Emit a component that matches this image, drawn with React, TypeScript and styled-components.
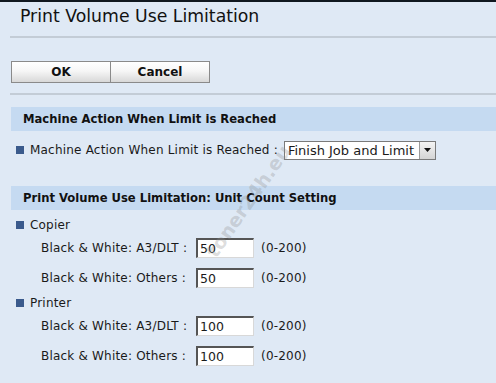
import React from "react";
import styled, { createGlobalStyle } from "styled-components";

const GlobalStyle = createGlobalStyle`
  html, body {
    margin: 0;
    padding: 0;
    background: #dfe9f5;
  }
  body {
    font-family: "DejaVu Sans", Verdana, sans-serif;
    color: #1a1a1a;
  }
`;

const SPage = styled.div`
  position: relative;
  width: 496px;
  height: 383px;
  overflow: hidden;
  border-top: 2px solid #101820;
  box-sizing: border-box;
`;

const STitle = styled.h1`
  margin: 0 0 0 10px;
  padding: 4px 0 0 10px;
  height: 30px;
  font-size: 17.3px;
  font-weight: normal;
  color: #111;
  border-bottom: 2px solid #c3ccd6;
`;

const SButtonBar = styled.div`
  display: flex;
  margin: 0 0 0 10px;
  padding: 23px 0 10px 1px;
  border-bottom: 2px solid #c3ccd6;
`;

const SButton = styled.button`
  width: 100px;
  height: 22px;
  padding: 0;
  font-family: "DejaVu Sans", Verdana, sans-serif;
  font-size: 12px;
  font-weight: bold;
  color: #111;
  background: linear-gradient(#ffffff 0%, #f6f6f6 45%, #d8d8d8 100%);
  border: 1px solid #8a8a8a;
  & + & {
    margin-left: -1px;
  }
`;

const SSectionHeader = styled.div<{ $top: number }>`
  margin: ${(p) => p.$top}px 0 0 11px;
  height: 24px;
  display: flex;
  align-items: center;
  padding-left: 12px;
  background: #c5daf1;
  font-size: 11.6px;
  font-weight: bold;
  color: #111;
`;

const SBulletRow = styled.div<{ $top: number }>`
  display: flex;
  align-items: center;
  margin: ${(p) => p.$top}px 0 0 16px;
  height: 20px;
  font-size: 12px;
  letter-spacing: 0.2px;
`;

const SBullet = styled.span`
  width: 8px;
  height: 8px;
  background: #3a5a8c;
  margin-right: 6px;
  flex-shrink: 0;
`;

const SSelect = styled.div`
  display: flex;
  align-items: stretch;
  margin-left: 6px;
  height: 19px;
  background: #fff;
  border: 1px solid #7a7a7a;
  box-sizing: border-box;
  letter-spacing: 0;
`;

const SSelectText = styled.span`
  padding: 0 5px 0 3px;
  font-size: 13px;
  line-height: 17px;
`;

const SSelectArrow = styled.span`
  width: 15px;
  display: flex;
  align-items: center;
  justify-content: center;
  background: linear-gradient(#f4f4f4, #d4d4d4);
  border-left: 1px solid #9a9a9a;
`;

const SFieldRow = styled.div<{ $top: number }>`
  display: flex;
  align-items: center;
  margin: ${(p) => p.$top}px 0 0 41px;
  height: 20px;
  font-size: 12px;
  letter-spacing: 0.2px;
`;

const SFieldLabel = styled.span`
  width: 155px;
  white-space: pre;
`;

const SInput = styled.div`
  width: 58px;
  height: 20px;
  box-sizing: border-box;
  background: #fff;
  border-top: 2px solid #555;
  border-left: 2px solid #555;
  border-right: 1px solid #d8d8d8;
  border-bottom: 1px solid #d8d8d8;
  padding-left: 2px;
  font-size: 12.5px;
  line-height: 17px;
  letter-spacing: 0;
`;

const SRange = styled.span`
  margin-left: 7px;
`;

const SWatermark = styled.div`
  position: absolute;
  left: 173px;
  top: 188px;
  width: 150px;
  text-align: center;
  transform: rotate(-55deg);
  font-family: "DejaVu Sans", sans-serif;
  font-size: 19px;
  font-weight: bold;
  color: rgba(140, 140, 140, 0.3);
  pointer-events: none;
`;

const fields = [
  { group: "Copier", rows: [["Black & White: A3/DLT :", "50"], ["Black & White: Others :", "50"]] },
  { group: "Printer", rows: [["Black & White: A3/DLT :", "100"], ["Black & White: Others :", "100"]] },
];

const App = () => (
  <>
    <GlobalStyle />
    <SPage>
      <STitle>Print Volume Use Limitation</STitle>
      <SButtonBar>
        <SButton>OK</SButton>
        <SButton>Cancel</SButton>
      </SButtonBar>
      <SSectionHeader $top={12}>Machine Action When Limit is Reached</SSectionHeader>
      <SBulletRow $top={9}>
        <SBullet />
        Machine Action When Limit is Reached :
        <SSelect>
          <SSelectText>Finish Job and Limit</SSelectText>
          <SSelectArrow>
            <svg width="7" height="4" viewBox="0 0 7 4">
              <path d="M0 0h7L3.5 4z" fill="#111" />
            </svg>
          </SSelectArrow>
        </SSelect>
      </SBulletRow>
      <SSectionHeader $top={26}>
        Print Volume Use Limitation: Unit Count Setting
      </SSectionHeader>
      {fields.map((f) => (
        <React.Fragment key={f.group}>
          <SBulletRow $top={5}>
            <SBullet />
            {f.group}
          </SBulletRow>
          {f.rows.map(([label, value], i) => (
            <SFieldRow key={i} $top={i === 0 ? 3 : 10}>
              <SFieldLabel>{label}</SFieldLabel>
              <SInput>{value}</SInput>
              <SRange>(0-200)</SRange>
            </SFieldRow>
          ))}
        </React.Fragment>
      ))}
      <SWatermark>toner24h.eu</SWatermark>
    </SPage>
  </>
);

export default App;
